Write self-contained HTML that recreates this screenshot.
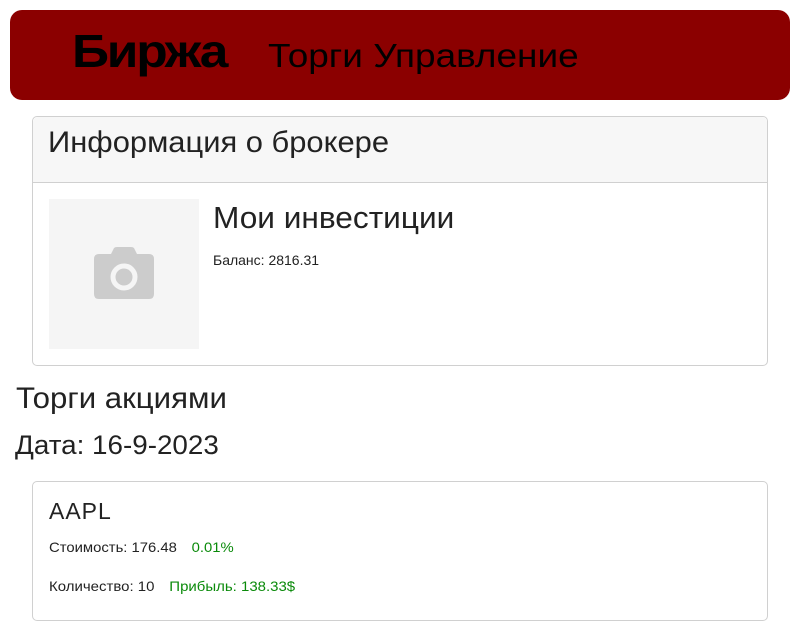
<!DOCTYPE html>
<html><head><meta charset="utf-8"><style>
body{margin:0;width:800px;height:600px;overflow:hidden;background:#fff;font-family:"Liberation Sans","DejaVu Sans",sans-serif;color:#222;position:relative}
.a{position:absolute;white-space:nowrap}
.nav{position:absolute;left:10px;top:10px;width:780px;height:90px;background:#8b0000;border-radius:12px}
.card{position:absolute;border:1px solid #d0d0d0;border-radius:5px;box-sizing:border-box}
</style></head><body>
<div class="nav"></div>
<div class="a" style="left:72px;top:24px;font-size:46px;font-weight:bold;color:#000;letter-spacing:-2px;transform:scaleX(1.12);transform-origin:left">Биржа</div>
<div class="a" style="left:268px;top:37px;font-size:33px;color:#000;transform:scaleX(1.12);transform-origin:left">Торги Управление</div>

<div class="card" style="left:32px;top:116px;width:736px;height:250px"></div>
<div class="a" style="left:33px;top:117px;width:734px;height:65px;background:#f7f7f7;border-bottom:1px solid #d0d0d0;border-radius:5px 5px 0 0"></div>
<div class="a" style="left:48px;top:126px;font-size:30px;transform:scaleX(1.03);transform-origin:left">Информация о брокере</div>
<div class="a" style="left:49px;top:199px;width:150px;height:150px;background:#f5f5f5"></div>
<svg class="a" style="left:94px;top:244px" width="60" height="56"><path d="M17 10 L20 4 Q21 3 23 3 L37 3 Q39 3 40 4 L43 10 L55 10 Q60 10 60 15 L60 50 Q60 55 55 55 L5 55 Q0 55 0 50 L0 15 Q0 10 5 10 Z" fill="#ccc"/><circle cx="30" cy="33" r="11" fill="none" stroke="#f5f5f5" stroke-width="5"/></svg>
<div class="a" style="left:213px;top:200px;font-size:31px;transform:scaleX(1.02);transform-origin:left">Мои инвестиции</div>
<div class="a" style="left:213px;top:252px;font-size:14px">Баланс: 2816.31</div>

<div class="a" style="left:16px;top:382px;font-size:30px;transform:scaleX(1.04);transform-origin:left">Торги акциями</div>
<div class="a" style="left:15px;top:430px;font-size:27px;transform:scaleX(1.03);transform-origin:left">Дата: 16-9-2023</div>

<div class="card" style="left:32px;top:481px;width:736px;height:140px"></div>
<div class="a" style="left:49px;top:498px;font-size:23px;letter-spacing:1px">AAPL</div>
<div class="a" style="left:49px;top:539px;font-size:14px;transform:scaleX(1.06);transform-origin:left">Стоимость: 176.48 <span style="color:#0a8a0a;margin-left:10px">0.01%</span></div>
<div class="a" style="left:49px;top:578px;font-size:14px;transform:scaleX(1.07);transform-origin:left">Количество: 10 <span style="color:#0a8a0a;margin-left:10px">Прибыль: 138.33$</span></div>
</body></html>
